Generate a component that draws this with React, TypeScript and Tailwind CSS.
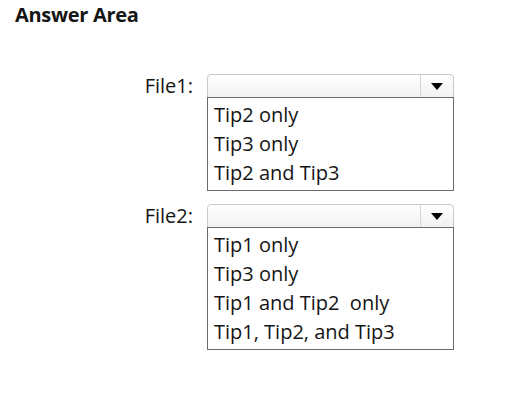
import React from "react";

function Arrow() {
  return (
    <div className="w-0 h-0 border-l-[6px] border-r-[6px] border-t-[7px] border-l-transparent border-r-transparent border-t-black" />
  );
}

function Field({ label, items }: { label: string; items: string[] }) {
  return (
    <div className="flex items-start">
      <div className="w-[193px] h-[24px] text-right text-[20px] leading-[24px]">{label}</div>
      <div className="ml-[14px] w-[247px] flex flex-col">
        <div className="h-[24px] flex border border-[#c6c9d1] rounded-t-[4px] bg-gradient-to-b from-white to-[#f1f1f3]">
          <div className="flex-1" />
          <div className="w-[33px] border-l border-[#d3d5da] flex items-center justify-center">
            <Arrow />
          </div>
        </div>
        <div className="-mt-px border border-[#6c6c6c] bg-white pl-[6px] pt-[2px] pb-[3px]">
          {items.map((t) => (
            <div key={t} className="h-[29px] leading-[29px] text-[20px] whitespace-pre">
              {t}
            </div>
          ))}
        </div>
      </div>
    </div>
  );
}

export default function App() {
  return (
    <div className="w-[509px] h-[402px] bg-white text-[#151515] font-['Open_Sans',sans-serif] overflow-hidden">
      <div className="pl-[15px] pt-[1px] h-[74px] text-[20px] font-bold leading-[27px] tracking-[-0.3px]">
        Answer Area
      </div>
      <div className="flex flex-col gap-[13px]">
        <Field label="File1:" items={["Tip2 only", "Tip3 only", "Tip2 and Tip3"]} />
        <Field
          label="File2:"
          items={["Tip1 only", "Tip3 only", "Tip1 and Tip2  only", "Tip1, Tip2, and Tip3"]}
        />
      </div>
    </div>
  );
}
